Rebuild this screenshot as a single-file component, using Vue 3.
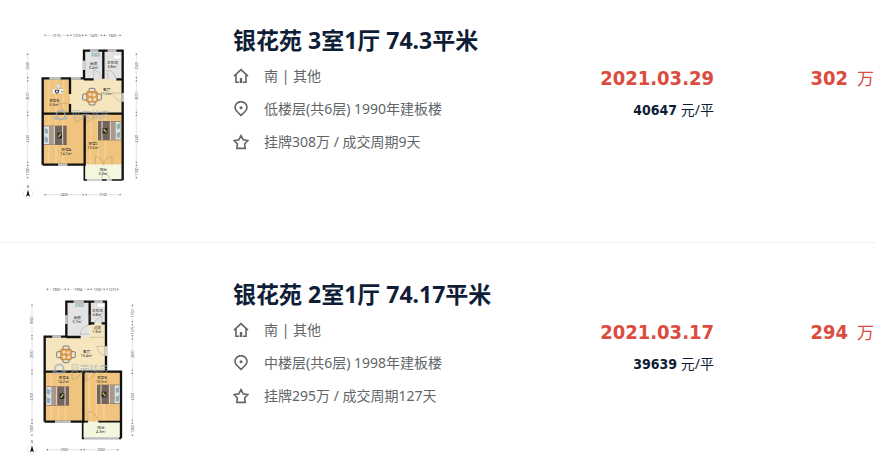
<script setup>
import { ref } from 'vue';

const houses = ref([
  {
    id: 1,
    title: '银花苑 3室1厅 74.3平米',
    orient: '南 | 其他',
    position: '低楼层(共6层) 1990年建板楼',
    cycle: '挂牌308万 / 成交周期9天',
    date: '2021.03.29',
    unitPrice: '40647',
    total: '302',
    plan: {
      viewBox: '-45 24 498 540',
      rooms: [
        { x: 210, y: 92, w: 112, h: 88, fill: 'tile' },
        { x: 165, y: 178, w: 157, h: 102, fill: 'cream' },
        { x: 83, y: 178, w: 82, h: 102, fill: 'wood' },
        { x: 83, y: 281, w: 126, h: 153, fill: 'wood' },
        { x: 209, y: 281, w: 114, h: 153, fill: 'wood' },
        { x: 208, y: 434, w: 114, h: 46, fill: 'balcony' },
      ],
      walls: 'M83 434V175H207V92H323V480M83 434H209V281M83 281H323M165 178V222M165 252V281M265 92V176M207 178H236M304 178H323',
      thin: 'M208 434V480H323',
      windows: 'M225 92H250M278 92H304M207 122V150M103 175H137M168 175H197M129 434H157M216 480H261M275 480H290M323 219V245',
      doors: 'M236 178V150Q254 152 261 178M278 178V150Q297 152 304 178M323 219H294Q298 242 323 245M165 250H136Q139 275 165 277M181 281V306Q201 304 205 281M214 281V306Q236 304 240 281M241 434V409Q262 412 266 434Q270 412 291 409V434M261 480V458Q281 460 286 480',
      beds: [{ x: 87, y: 317, flip: false }, { x: 249, y: 303, flip: true }],
      table: { x: 231, y: 230 },
      desk: { x: 112, y: 192 },
      sinks: { x: 229, y: 98 },
      basin: { x: 295, y: 105 },
      labels: [
        { x: 236, y: 134, name: '厨房', size: '3.4m²' },
        { x: 292, y: 132, name: '卫生间', size: '3.8m²' },
        { x: 275, y: 212, name: '客厅', size: '11.5m²' },
        { x: 118, y: 247, name: '卧室B', size: '6.3m²' },
        { x: 154, y: 392, name: '卧室A', size: '14.1m²' },
        { x: 235, y: 374, name: '卧室C', size: '13.5m²' },
        { x: 265, y: 452, name: '阳台', size: '3.2m²' },
      ],
      mark: { x: 137, y: 285 },
      north: { x: 39, y: 520 },
      across: [
        { y: 46, stops: [86, 163, 208, 264, 320], texts: ['2170', '1210', '1470', '1600'] },
        { y: 524, stops: [86, 209, 320], texts: ['3400', '3100'] },
      ],
      down: [
        { x: 38, stops: [98, 178, 281, 431, 477], texts: ['2340', '2870', '4240', '1300'] },
        { x: 364, stops: [98, 178, 281, 431, 477], texts: ['2340', '2870', '4240', '1300'] },
      ],
    },
  },
  {
    id: 2,
    title: '银花苑 2室1厅 74.17平米',
    orient: '南 | 其他',
    position: '中楼层(共6层) 1998年建板楼',
    cycle: '挂牌295万 / 成交周期127天',
    date: '2021.03.17',
    unitPrice: '39639',
    total: '294',
    plan: {
      viewBox: '-45 21 498 540',
      rooms: [
        { x: 154, y: 80, w: 70, h: 106, fill: 'tile' },
        { x: 224, y: 80, w: 48, h: 65, fill: 'tile' },
        { x: 224, y: 145, w: 48, h: 43, fill: 'cream' },
        { x: 90, y: 186, w: 184, h: 104, fill: 'cream' },
        { x: 90, y: 290, w: 115, h: 150, fill: 'wood' },
        { x: 205, y: 290, w: 113, h: 150, fill: 'wood' },
        { x: 203, y: 440, w: 114, h: 50, fill: 'balcony' },
      ],
      walls: 'M89 440V185H154V80H273V290M89 290H318V490M89 440H205V290M224 80V150M224 145H238M260 145H272M154 186H197',
      thin: 'M203 440V490H318M205 440H219M250 440H318',
      windows: 'M176 80H206M238 80H263M154 121V147M112 185H138M120 440H167M207 490H312M273 214V243',
      doors: 'M224 177H195Q199 152 224 150M225 187H270M224 143V120H242M260 145V124Q245 127 239 145M273 214H246Q249 240 273 242M171 290V312Q190 317 199 290M213 290V317Q234 313 240 290M249 440Q245 411 219 409V440',
      beds: [{ x: 94, y: 334, flip: false }, { x: 246, y: 329, flip: true }],
      table: { x: 153, y: 238 },
      desk: null,
      sinks: { x: 181, y: 84 },
      basin: { x: 246, y: 85 },
      labels: [
        { x: 187, y: 133, name: '厨房', size: '5.7m²' },
        { x: 247, y: 111, name: '卫生间', size: '2.8m²' },
        { x: 247, y: 162, name: '过道', size: '1.6m²' },
        { x: 215, y: 234, name: '客厅', size: '13.4m²' },
        { x: 146, y: 313, name: '卧室A', size: '14.2m²' },
        { x: 261, y: 313, name: '卧室B', size: '13.5m²' },
        { x: 258, y: 461, name: '阳台', size: '4.3m²' },
      ],
      mark: { x: 133, y: 281 },
      north: { x: 51, y: 522 },
      across: [
        { y: 43, stops: [93, 155, 224, 272, 313], texts: ['1800', '1994', '1350', '1215'] },
        { y: 524, stops: [93, 203, 313], texts: ['3300', '3300'] },
      ],
      down: [
        { x: 51, stops: [86, 187, 290, 440, 485], texts: ['3060', '2900', '4250', '1300'] },
        { x: 352, stops: [86, 145, 187, 290, 440, 485], texts: ['1750', '1275', '2900', '4250', '1300'] },
      ],
    },
  },
]);

// line between two stops, broken in the middle for its number
const segment = (line, i) => {
  const a = line.stops[i];
  const b = line.stops[i + 1];
  return { a, b, mid: (a + b) / 2 };
};
</script>

<template>
  <ul class="house-list">
    <li v-for="house in houses" :key="house.id" class="house">
      <svg class="plan" :viewBox="house.plan.viewBox" role="img" :aria-label="house.title">
        <rect
          v-for="(room, i) in house.plan.rooms"
          :key="'r' + i"
          :x="room.x"
          :y="room.y"
          :width="room.w"
          :height="room.h"
          :class="room.fill"
        />
        <template v-for="(room, i) in house.plan.rooms" :key="'g' + i">
          <path
            v-if="room.fill === 'wood'"
            class="grain"
            :d="`M${room.x + 18} ${room.y}v${room.h}M${room.x + 40} ${room.y}v${room.h}M${room.x + 62} ${room.y}v${room.h}`"
          />
        </template>

        <path class="wall" :d="house.plan.walls" />
        <path class="wall-thin" :d="house.plan.thin" />
        <path class="window" :d="house.plan.windows" />
        <path class="window-line" :d="house.plan.windows" />
        <path class="door" :d="house.plan.doors" />

        <g class="watermark">
          <circle :cx="house.plan.mark.x" :cy="house.plan.mark.y" r="13" />
          <path :d="`M${house.plan.mark.x - 20} ${house.plan.mark.y + 6}l8 8M${house.plan.mark.x + 20} ${house.plan.mark.y + 6}l-8 8`" />
          <text :x="house.plan.mark.x + 32" :y="house.plan.mark.y + 10">贝壳找房</text>
        </g>

        <g
          v-for="(bed, i) in house.plan.beds"
          :key="'b' + i"
          :transform="bed.flip ? `translate(${bed.x + 68} ${bed.y}) scale(-1 1)` : `translate(${bed.x} ${bed.y})`"
        >
          <rect width="68" height="58" fill="#75645b" />
          <rect y="2" width="16" height="54" fill="#dfe5e5" />
          <path d="M2 6l11 6-3 14-8-4zM2 32l11 5-3 15-8-3z" fill="#8faeb8" />
          <rect x="16" y="1" width="15" height="56" fill="#aa988b" />
          <path d="M31 1V57M56 1V57" stroke="#e5ddd5" stroke-width="3" />
          <rect x="40" y="21" width="14" height="17" fill="#292b28" />
          <path d="M43 34l8-10" stroke="#c9c05a" stroke-width="4" />
        </g>

        <g :transform="`translate(${house.plan.table.x} ${house.plan.table.y})`">
          <rect x="-9" y="-25" width="18" height="50" rx="3" fill="#eee6d4" stroke="#4b4540" stroke-width="2" />
          <rect x="-28" y="-8" width="56" height="18" rx="3" fill="#eee6d4" stroke="#4b4540" stroke-width="2" />
          <rect x="-17" y="-16" width="34" height="33" rx="5" fill="#d79a50" stroke="#a36b32" />
          <path d="M-12-8l7-4 5 6-7 5zM3-10l9 2-3 8-8-3zM-12 6l8-3 5 8-9 2zM4 5l9-2-1 9-8 1z" fill="#f4dfbc" />
        </g>
        <g v-if="house.plan.desk" :transform="`translate(${house.plan.desk.x} ${house.plan.desk.y})`">
          <path d="M12 0h12v12h-12z" fill="#e6e1dc" stroke="#aaa098" />
          <path d="M0 15h33v14H0z" fill="#f8faf9" stroke="#bbb5aa" />
          <path d="M8 19h12l-3 8h-6zM27 23h4" fill="none" stroke="#2c3235" stroke-width="3" />
        </g>
        <g :transform="`translate(${house.plan.sinks.x} ${house.plan.sinks.y})`">
          <rect width="26" height="12" fill="#b9cbd5" />
          <path d="M3 3h8v6H3zM15 3h8v6h-8z" fill="#d7e6ed" stroke="#66798a" />
        </g>
        <rect
          :x="house.plan.basin.x"
          :y="house.plan.basin.y"
          width="23"
          height="12"
          rx="2"
          fill="#fff"
          stroke="#bbb"
        />

        <text v-for="label in house.plan.labels" :key="label.name" class="room-label">
          <tspan :x="label.x" :y="label.y">{{ label.name }}</tspan>
          <tspan :x="label.x" :y="label.y + 12">{{ label.size }}</tspan>
        </text>

        <template v-for="(line, n) in house.plan.across" :key="'a' + n">
          <g v-for="(text, i) in line.texts" :key="i" class="measure">
            <path :d="`M${segment(line, i).a + 3} ${line.y}H${segment(line, i).mid - 13}M${segment(line, i).mid + 13} ${line.y}H${segment(line, i).b - 3}`" />
            <path class="tip" :d="`M${segment(line, i).a + 1} ${line.y}l5-3v6zM${segment(line, i).b - 1} ${line.y}l-5-3v6z`" />
            <text :x="segment(line, i).mid" :y="line.y + 4">{{ text }}</text>
          </g>
        </template>
        <template v-for="(line, n) in house.plan.down" :key="'d' + n">
          <g v-for="(text, i) in line.texts" :key="i" class="measure">
            <path :d="`M${line.x} ${segment(line, i).a + 3}V${segment(line, i).mid - 13}M${line.x} ${segment(line, i).mid + 13}V${segment(line, i).b - 3}`" />
            <path class="tip" :d="`M${line.x} ${segment(line, i).a + 1}l-3 5h6zM${line.x} ${segment(line, i).b - 1}l-3-5h6z`" />
            <text
              :x="line.x"
              :y="segment(line, i).mid + 4"
              :transform="`rotate(-90 ${line.x} ${segment(line, i).mid})`"
            >{{ text }}</text>
          </g>
        </template>

        <g :transform="`translate(${house.plan.north.x} ${house.plan.north.y})`">
          <circle r="14" fill="none" stroke="#ccc" />
          <path d="M0-11L6 10 0 6-6 10z" fill="#111" />
          <text class="north" y="-17">N</text>
        </g>
      </svg>

      <div class="info">
        <h2 class="title">{{ house.title }}</h2>
        <p class="line">
          <svg class="icon" viewBox="0 0 16 16" aria-hidden="true">
            <path d="M1 8.2L8 1.6l7 6.6M3 6.8V14.2h3.2M13 6.8V14.2H9.8" />
            <path d="M8 10v5" stroke-width="2.4" />
          </svg>
          {{ house.orient }}
        </p>
        <p class="line">
          <svg class="icon" viewBox="0 0 16 16" aria-hidden="true">
            <path d="M8 14.5C5.4 12 2 9.5 2 6.6a6 6 0 0 1 12 0C14 9.5 10.6 12 8 14.5z" />
            <circle cx="8" cy="6.8" r="1.5" class="dot" />
          </svg>
          {{ house.position }}
        </p>
        <p class="line">
          <svg class="icon" viewBox="0 0 16 16" aria-hidden="true">
            <path d="M8 1.6l2.1 4.1 4.8.9-3.3 3.4.6 4.4H3.8l.6-4.4L1.1 6.6l4.8-.9z" />
          </svg>
          {{ house.cycle }}
        </p>
      </div>

      <div class="deal">
        <div class="date">{{ house.date }}</div>
        <div class="unit-price"><b>{{ house.unitPrice }}</b> 元/平</div>
      </div>

      <div class="total"><b>{{ house.total }}</b><span>万</span></div>
    </li>
  </ul>
</template>

<style>
body {
  margin: 0;
  background: #fff;
}
</style>

<style scoped>
.house-list {
  margin: 0 11px 0 0;
  padding: 0;
  list-style: none;
  font-family: "Noto Sans", "Noto Sans CJK SC", sans-serif;
  color: #101d37;
}

.house {
  display: grid;
  grid-template-columns: 233px 1fr auto 160px;
  padding: 39px 2px 34px 0;
  border-bottom: 1px solid #f0f0f0;
}

.house:first-child {
  padding-top: 28px;
}

.house:last-child {
  padding-bottom: 0;
  border-bottom: none;
}

.plan {
  width: 166px;
  height: 180px;
}

.title {
  margin: 0 0 7px;
  font-size: 23px;
  line-height: 24px;
  font-weight: 700;
  white-space: nowrap;
}

.line {
  display: flex;
  align-items: center;
  gap: 15px;
  margin: 0;
  font-size: 14px;
  line-height: 33px;
  color: #616669;
  white-space: nowrap;
}

.icon {
  width: 16px;
  height: 16px;
  fill: none;
  stroke: #616669;
  stroke-width: 1.6;
}

.icon .dot {
  fill: #616669;
  stroke: none;
}

.deal,
.total {
  padding-top: 34px;
  line-height: 32px;
  text-align: right;
  white-space: nowrap;
}

.date,
.total {
  color: #db4c3f;
}

.date,
.deal b,
.total b {
  font-family: "DejaVu Sans Condensed", "Noto Sans", sans-serif;
  font-weight: 700;
}

.date,
.total b {
  font-size: 20px;
}

.unit-price {
  font-size: 14px;
}

.total span {
  margin-left: 9px;
  font-size: 17px;
}

.tile {
  fill: #e3e3e4;
}

.cream {
  fill: #f5e6bd;
}

.wood {
  fill: #f0c47e;
}

.balcony {
  fill: #f5f6df;
}

.grain {
  stroke: #f7d596;
  stroke-width: 6;
  opacity: 0.6;
}

.wall,
.wall-thin {
  fill: none;
  stroke: #111;
  stroke-width: 7;
}

.wall-thin {
  stroke-width: 5;
}

.window {
  fill: none;
  stroke: #eee;
  stroke-width: 7;
}

.window-line {
  fill: none;
  stroke: #999;
  stroke-width: 2;
}

.door {
  fill: none;
  stroke: #8b8173;
  stroke-width: 1;
}

.watermark {
  fill: none;
  stroke: #8da9cf;
  stroke-width: 5;
  opacity: 0.7;
}

.watermark text {
  font-size: 29px;
  fill: #a2b2c8;
  stroke: none;
}

.room-label {
  font-size: 11px;
  text-anchor: middle;
  fill: #222;
}

.measure path {
  fill: none;
  stroke: #aaa;
  stroke-width: 1;
}

.measure .tip {
  fill: #777;
  stroke: none;
}

.measure text {
  font-size: 10px;
  text-anchor: middle;
  fill: #444;
}

.north {
  font-size: 9px;
  text-anchor: middle;
  fill: #333;
}
</style>
